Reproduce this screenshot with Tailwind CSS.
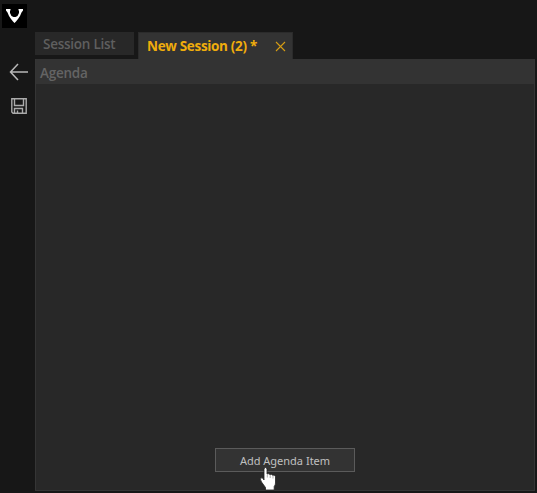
<!DOCTYPE html>
<html lang="en">
<head>
<meta charset="utf-8">
<title>Session</title>
<script src="https://cdn.jsdelivr.net/npm/@tailwindcss/browser@4"></script>
</head>
<body class="relative flex h-[493px] w-[537px] flex-col overflow-hidden bg-[#171717] font-['Open_Sans','Noto_Sans',sans-serif]">
  <header class="h-8 shrink-0 pl-[2px] pt-1">
    <svg class="h-6 w-[25px]" viewBox="0 0 25 24" aria-label="Logo"><path fill="#000" d="M0 0h25v24H0z"/><path fill="#fff" d="M4 5h4.500v1.500H8V9l1.500 3 2 1h2l2-1L17 9V6.500h-.500V5H21v1.500L19.500 8.500 18 12l-2 3-2 2.500-1.500 1.500-1.500-1.500L9 15l-2-3-1.500-3.500L4 6.500z"/></svg>
  </header>
  <div class="flex h-[459px] pr-[2px]">
    <nav class="w-[35px] shrink-0 pt-[31px]">
      <svg class="ml-[9px] h-[18px] w-5" viewBox="0 0 20 18" fill="none" stroke="#b8b8b8" stroke-width="1.5"><path d="M9 1 1.500 9 9 17M1.500 9H19"/></svg>
      <svg class="ml-[11px] mt-[17px] h-4 w-4" viewBox="0 0 16 16" fill="none" stroke="#ababab" stroke-width="1.4"><path d="M.8.8h14.400v14.400H2L.8 14zM3.500 1v6.500h9V1M3.500 15v-4.500h8V15M6.500 12.500V15"/></svg>
    </nav>
    <main class="flex w-[500px] flex-col">
      <div class="flex h-[27px] shrink-0 gap-1">
        <div class="h-[23px] w-[99px] bg-[#282828] pl-2 text-[13.5px] leading-[24px] font-semibold text-[#5f5f5f]"><span class="whitespace-nowrap tracking-[-0.25px]">Session List</span></div>
        <div class="flex h-[27px] w-[155px] items-center justify-between border-x border-t border-[#2b2b2b] bg-[#333] pl-2 pr-1.5 text-[13.5px] font-bold text-[#f0ad0c]">
          <span class="whitespace-nowrap pt-px tracking-[-0.32px]">New Session (2) *</span>
          <svg class="h-[11px] w-[11px]" viewBox="0 0 11 11" fill="none" stroke="#d69d14" stroke-width="1.1"><path d="m1 1 9 9M10 1l-9 9"/></svg>
        </div>
      </div>
      <section class="flex h-[432px] flex-col border border-t-0 border-[#353535] bg-[#282828]">
        <h1 class="h-[25px] shrink-0 bg-[#333] pl-1 text-[13.5px] leading-[28px] font-semibold text-[#646464]"><span class="tracking-[-0.25px]">Agenda</span></h1>
        <div class="flex grow items-end justify-center pb-[18px]">
          <button class="h-6 w-[140px] border border-[#5b5b5b] bg-[#333] pt-px text-[11px] leading-[22px] text-[#c0c0c0]"><span class="whitespace-nowrap font-['Noto_Sans','Open_Sans',sans-serif]">Add Agenda Item</span></button>
        </div>
      </section>
    </main>
  </div>
  <svg class="absolute left-[259px] top-[466px] h-[25px] w-[18px]" viewBox="0 0 18 25"><path fill="#fff" stroke="#222" stroke-width=".8" d="M5 14V3.500Q5 1.500 6.500 1.500T8 3.500V8q1-1 3 .5 1.500-.6 2.500.7 2.500-.5 3 1.500V17q0 2-1.300 3.500V24H6.500v-2.500L2.500 16Q.5 12.500 2.200 11.800 3.800 11.200 5 14z"/><path d="M8.300 8.500v3M11.200 9v3M14 10v2.500" stroke="#777" stroke-width=".6"/></svg>
</body>
</html>
